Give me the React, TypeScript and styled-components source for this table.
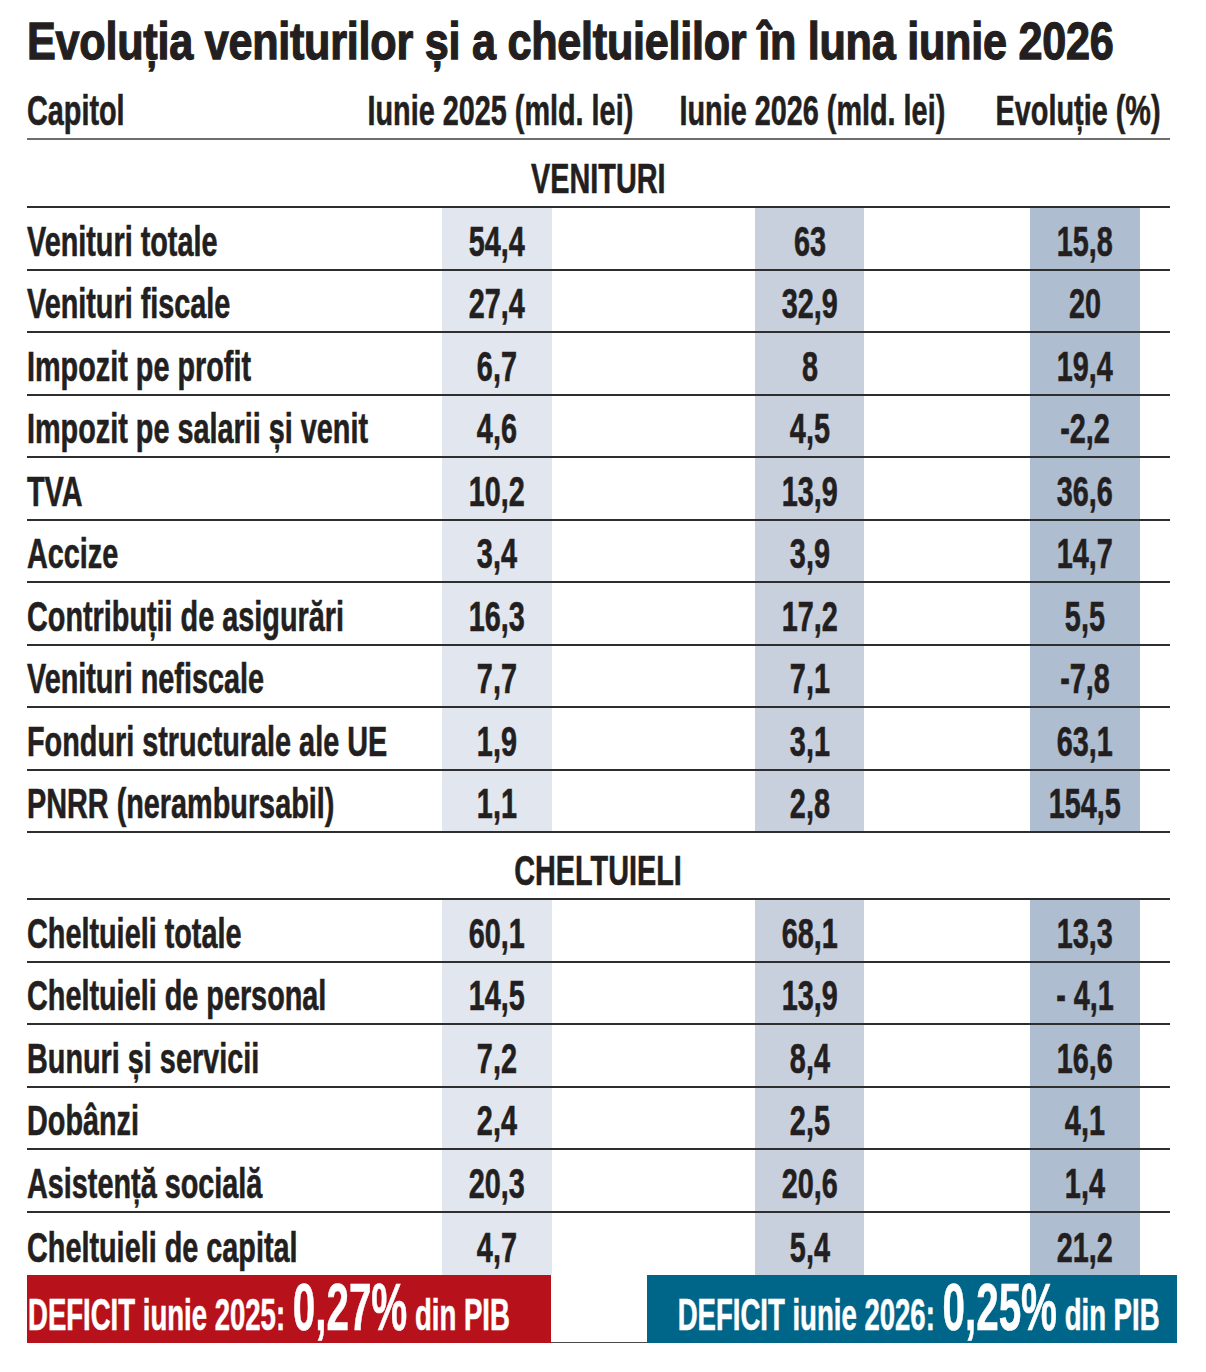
import styled, { createGlobalStyle } from 'styled-components'

const GlobalStyle = createGlobalStyle`
  html, body {
    margin: 0;
    padding: 0;
    background: #ffffff;
  }
  body {
    font-family: 'Liberation Sans', Arial, sans-serif;
    color: #231f20;
  }
`

const COLUMNS = '415px 110px 203px 109px 166px 110px 30px'
const SHADE = ['#e1e6ef', '#c8d0de', '#aebdd0']

const Page = styled.main`
  width: 1206px;
  box-sizing: border-box;
  padding: 15px 0 0 27px;
  overflow: hidden;
`

const Squeeze = styled.span<{ $scale: number; $origin?: string; $shift?: number }>`
  display: inline-block;
  white-space: nowrap;
  transform: translateX(${(p) => p.$shift ?? 0}px) scaleX(${(p) => p.$scale});
  transform-origin: ${(p) => p.$origin ?? 'center'};
`

const Title = styled.h1`
  margin: 0;
  font-size: 52px;
  line-height: 52px;
  font-weight: 700;
  letter-spacing: -0.3px;
  -webkit-text-stroke: 1.3px #231f20;
`

const Row = styled.div<{ $h: number; $line?: string }>`
  display: grid;
  grid-template-columns: ${COLUMNS};
  width: 1143px;
  height: ${(p) => p.$h}px;
  box-sizing: border-box;
  border-bottom: ${(p) => (p.$line ? `2px solid ${p.$line}` : 'none')};
  font-size: 43px;
  line-height: 43px;
  font-weight: 700;
  -webkit-text-stroke: 0.6px #231f20;
`

const Cell = styled.div<{ $col: number; $bg?: string; $left?: boolean }>`
  grid-column: ${(p) => p.$col};
  display: flex;
  align-items: flex-end;
  justify-content: ${(p) => (p.$left ? 'flex-start' : 'center')};
  padding-bottom: 6px;
  background: ${(p) => p.$bg ?? 'transparent'};
  min-width: 0;
`

const SectionCell = styled.div`
  grid-column: 1 / -1;
  display: flex;
  align-items: flex-end;
  justify-content: center;
  padding-bottom: 6px;
`

const Footer = styled.div`
  display: grid;
  grid-template-columns: 524px 96px 530px;
  width: 1150px;
  height: 68px;
  box-sizing: border-box;
  border-bottom: 1px solid #4a4a4a;
`

const Deficit = styled.div<{ $bg: string; $center?: boolean }>`
  grid-column: ${(p) => (p.$center ? 3 : 1)};
  background: ${(p) => p.$bg};
  color: #ffffff;
  display: flex;
  align-items: flex-end;
  justify-content: ${(p) => (p.$center ? 'center' : 'flex-start')};
  padding: 0 0 4px 1px;
  font-weight: 700;
  font-size: 45px;
  line-height: 64px;
  -webkit-text-stroke: 0.6px #ffffff;
`

const Big = styled.span`
  font-size: 66px;
`

type Line = [string, string, string, string]

const venituri: Line[] = [
  ['Venituri totale', '54,4', '63', '15,8'],
  ['Venituri fiscale', '27,4', '32,9', '20'],
  ['Impozit pe profit', '6,7', '8', '19,4'],
  ['Impozit pe salarii și venit', '4,6', '4,5', '-2,2'],
  ['TVA', '10,2', '13,9', '36,6'],
  ['Accize', '3,4', '3,9', '14,7'],
  ['Contribuții de asigurări', '16,3', '17,2', '5,5'],
  ['Venituri nefiscale', '7,7', '7,1', '-7,8'],
  ['Fonduri structurale ale UE', '1,9', '3,1', '63,1'],
  ['PNRR (nerambursabil)', '1,1', '2,8', '154,5'],
]

const cheltuieli: Line[] = [
  ['Cheltuieli totale', '60,1', '68,1', '13,3'],
  ['Cheltuieli de personal', '14,5', '13,9', '- 4,1'],
  ['Bunuri și servicii', '7,2', '8,4', '16,6'],
  ['Dobânzi', '2,4', '2,5', '4,1'],
  ['Asistență socială', '20,3', '20,6', '1,4'],
  ['Cheltuieli de capital', '4,7', '5,4', '21,2'],
]

const BODY = 0.67

const DataRow = ({ line, last }: { line: Line; last?: boolean }) => (
  <Row $h={62.5} $line={last ? undefined : '#2e2e2e'}>
    <Cell $col={1} $left>
      <Squeeze $scale={BODY} $origin="left">{line[0]}</Squeeze>
    </Cell>
    {[2, 4, 6].map((col, i) => (
      <Cell key={col} $col={col} $bg={SHADE[i]}>
        <Squeeze $scale={BODY}>{line[i + 1]}</Squeeze>
      </Cell>
    ))}
  </Row>
)

const Section = ({ label, h }: { label: string; h: number }) => (
  <Row $h={h} $line="#2e2e2e">
    <SectionCell>
      <Squeeze $scale={BODY}>{label}</Squeeze>
    </SectionCell>
  </Row>
)

export default function App() {
  return (
    <Page>
      <GlobalStyle />
      <Title>
        <Squeeze $scale={0.83} $origin="left">
          Evoluția veniturilor și a cheltuielilor în luna iunie 2026
        </Squeeze>
      </Title>

      <Row $h={73} $line="#6e6e6e">
        <Cell $col={1} $left>
          <Squeeze $scale={BODY} $origin="left">Capitol</Squeeze>
        </Cell>
        <Cell $col={2}>
          <Squeeze $scale={BODY} $shift={3}>Iunie 2025 (mld. lei)</Squeeze>
        </Cell>
        <Cell $col={4}>
          <Squeeze $scale={BODY} $shift={3}>Iunie 2026 (mld. lei)</Squeeze>
        </Cell>
        <Cell $col={6}>
          <Squeeze $scale={BODY} $shift={-7}>Evoluție (%)</Squeeze>
        </Cell>
      </Row>

      <Section label="VENITURI" h={68} />
      {venituri.map((line) => (
        <DataRow key={line[0]} line={line} />
      ))}

      <Section label="CHELTUIELI" h={67} />
      {cheltuieli.map((line, i) => (
        <DataRow key={line[0]} line={line} last={i === cheltuieli.length - 1} />
      ))}

      <Footer>
        <Deficit $bg="#b7121b">
          <Squeeze $scale={0.612} $origin="left">
            DEFICIT iunie 2025: <Big>0,27%</Big> din PIB
          </Squeeze>
        </Deficit>
        <Deficit $bg="#006689" $center>
          <Squeeze $scale={0.612} $shift={6}>
            DEFICIT iunie 2026: <Big>0,25%</Big> din PIB
          </Squeeze>
        </Deficit>
      </Footer>
    </Page>
  )
}
